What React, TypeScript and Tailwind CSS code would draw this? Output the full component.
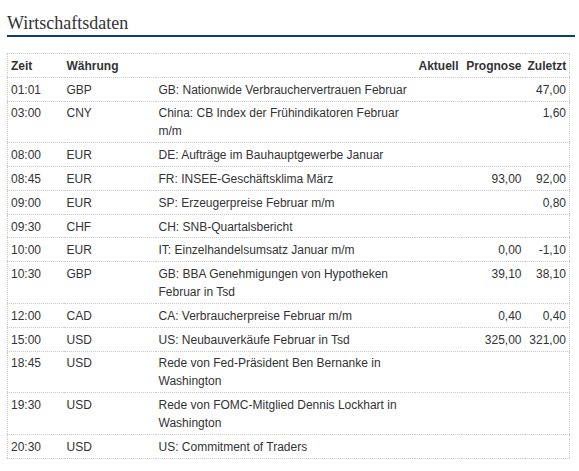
import React from "react";

type Row = { t: string; c: string; e: string; a?: string; p?: string; z?: string };

const rows: Row[] = [
  { t: "01:01", c: "GBP", e: "GB: Nationwide Verbrauchervertrauen Februar", z: "47,00" },
  { t: "03:00", c: "CNY", e: "China: CB Index der Frühindikatoren Februar m/m", z: "1,60" },
  { t: "08:00", c: "EUR", e: "DE: Aufträge im Bauhauptgewerbe Januar" },
  { t: "08:45", c: "EUR", e: "FR: INSEE-Geschäftsklima März", p: "93,00", z: "92,00" },
  { t: "09:00", c: "EUR", e: "SP: Erzeugerpreise Februar m/m", z: "0,80" },
  { t: "09:30", c: "CHF", e: "CH: SNB-Quartalsbericht" },
  { t: "10:00", c: "EUR", e: "IT: Einzelhandelsumsatz Januar m/m", p: "0,00", z: "-1,10" },
  { t: "10:30", c: "GBP", e: "GB: BBA Genehmigungen von Hypotheken Februar in Tsd", p: "39,10", z: "38,10" },
  { t: "12:00", c: "CAD", e: "CA: Verbraucherpreise Februar m/m", p: "0,40", z: "0,40" },
  { t: "15:00", c: "USD", e: "US: Neubauverkäufe Februar in Tsd", p: "325,00", z: "321,00" },
  { t: "18:45", c: "USD", e: "Rede von Fed-Präsident Ben Bernanke in Washington" },
  { t: "19:30", c: "USD", e: "Rede von FOMC-Mitglied Dennis Lockhart in Washington" },
  { t: "20:30", c: "USD", e: "US: Commitment of Traders" },
];

const cell = "pt-[2.9px] pb-[1.9px] px-[3px] align-top";

export default function App() {
  return (
    <div className="min-h-[471px] w-[579px] bg-white pl-[7px] text-[#333]" style={{ fontFamily: '"Liberation Sans", Arial, sans-serif' }}>
      <h2
        className="mb-[16px] w-[568px] border-b-2 border-[#0b3f7d] pt-[12px] pb-[1px] text-[18px] leading-[22px] font-normal text-[#333]"
        style={{ fontFamily: '"Liberation Serif", "Times New Roman", serif' }}
      >
        Wirtschaftsdaten
      </h2>
      <table className="w-[563px] table-fixed border-collapse border border-dotted border-[#c8c8c8] text-[12px] leading-[18px]">
        <colgroup>
          <col className="w-[56px]" />
          <col className="w-[92px]" />
          <col />
          <col className="w-[47px]" />
          <col className="w-[63px]" />
          <col className="w-[45px]" />
        </colgroup>
        <thead>
          <tr className="border-b border-dotted border-[#c8c8c8]">
            <th className={`${cell} text-left font-bold`}>Zeit</th>
            <th className={`${cell} text-left font-bold`}>Währung</th>
            <th className={cell}></th>
            <th className={`${cell} text-right font-bold`}>Aktuell</th>
            <th className={`${cell} text-right font-bold`}>Prognose</th>
            <th className={`${cell} text-right font-bold`}>Zuletzt</th>
          </tr>
        </thead>
        <tbody>
          {rows.map((r, i) => (
            <tr key={i} className="border-b border-dotted border-[#c8c8c8]">
              <td className={cell}>{r.t}</td>
              <td className={cell}>{r.c}</td>
              <td className={cell}>{r.e}</td>
              <td className={`${cell} text-right`}>{r.a ?? ""}</td>
              <td className={`${cell} text-right`}>{r.p ?? ""}</td>
              <td className={`${cell} text-right`}>{r.z ?? ""}</td>
            </tr>
          ))}
        </tbody>
      </table>
    </div>
  );
}
